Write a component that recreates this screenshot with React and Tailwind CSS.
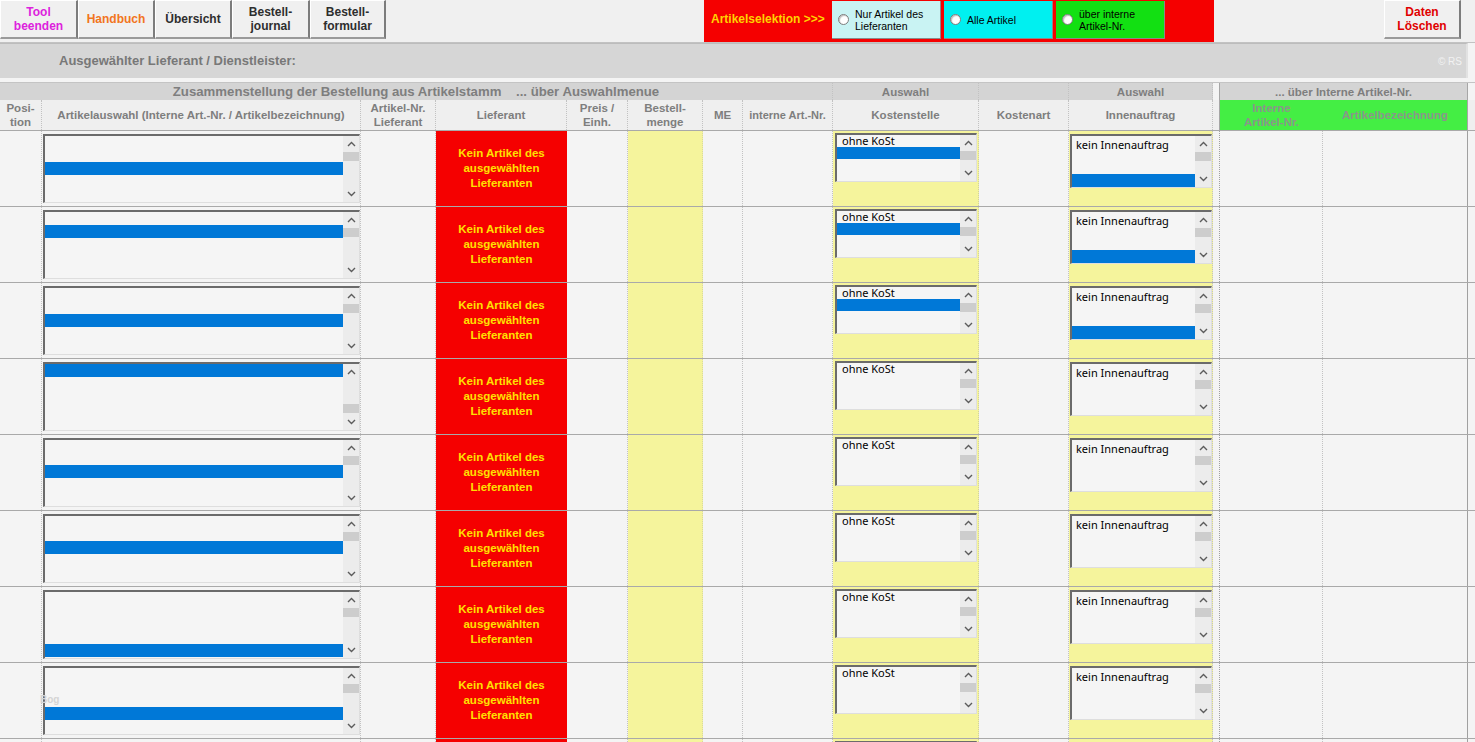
import React from "react";

const ARIAL = "font-['Liberation_Sans',Arial,sans-serif]";
const SEGOE = "font-['Noto_Sans','Open_Sans',sans-serif]";

const Up = () => (
  <svg width="9" height="6" viewBox="0 0 9 6">
    <path d="M1 5 L4.5 1.5 L8 5" fill="none" stroke="#5c5c5c" strokeWidth="1.4" />
  </svg>
);
const Down = () => (
  <svg width="9" height="6" viewBox="0 0 9 6">
    <path d="M1 1 L4.5 4.5 L8 1" fill="none" stroke="#5c5c5c" strokeWidth="1.4" />
  </svg>
);

function ScrollBar({ thumb = 0 }) {
  return (
    <div className="w-[16px] h-full bg-[#ececec] flex flex-col shrink-0">
      <div className="h-[16px] flex items-center justify-center shrink-0">
        <Up />
      </div>
      <div className="flex-1 w-full">
        <div className="h-[9px] w-full bg-[#cdcdcd]" style={{ marginTop: thumb }} />
      </div>
      <div className="h-[16px] flex items-center justify-center shrink-0">
        <Down />
      </div>
    </div>
  );
}

function ListBox({ className, children, thumb }) {
  return (
    <div
      className={`flex border-t-2 border-l-2 border-r border-b border-t-[#6b6b6b] border-l-[#6b6b6b] border-r-[#dedede] border-b-[#dedede] bg-[#f5f5f5] ${className}`}
    >
      <div className="flex-1 min-w-0">{children}</div>
      <ScrollBar thumb={thumb} />
    </div>
  );
}

function Btn({ children, className }) {
  return (
    <div
      className={`h-[39px] shrink-0 flex items-center justify-center text-center text-[12px] leading-[14px] font-bold bg-[#f0f0f0] border-t border-l border-t-white border-l-white border-r-2 border-b-2 border-r-[#7c7c7c] border-b-[#9a9a9a] ${ARIAL} ${className}`}
    >
      <div>{children}</div>
    </div>
  );
}

function Radio() {
  return (
    <div className="w-[11px] h-[11px] rounded-full bg-white border border-[#7d7d7d] shadow-[inset_1px_1px_1px_rgba(0,0,0,0.25)] shrink-0" />
  );
}

function Option({ className, children }) {
  return (
    <div
      className={`w-[109px] h-[38px] mt-[1px] shrink-0 flex items-center gap-[6px] pl-[6px] border-r border-b border-r-[#8a8a8a] border-b-[#8a8a8a] ${className}`}
    >
      <Radio />
      <div className={`text-[10.5px] leading-[12px] text-black ${ARIAL}`}>{children}</div>
    </div>
  );
}

const rows = [
  { sel: 26, thumb: 0, kost: true, innen: true },
  { sel: 13, thumb: 0, kost: true, innen: true },
  { sel: 26, thumb: 0, kost: true, innen: true },
  { sel: 0, thumb: 24, kost: false, innen: false },
  { sel: 25, thumb: 0, kost: false, innen: false },
  { sel: 25, thumb: 0, kost: false, innen: false },
  { sel: 52, thumb: 0, kost: false, innen: false },
  { sel: 39, thumb: 0, kost: false, innen: false, bog: true },
  { sel: 26, thumb: 0, kost: false, innen: false, partial: true },
];

const SEP = "border-r border-dotted border-[#c2c2c2]";

function Row({ r }) {
  return (
    <div className="relative flex h-[76px] shrink-0 border-t border-[#a9a9a9]">
      <div className={`w-[42px] shrink-0 ${SEP}`} />
      <div className={`w-[319px] shrink-0 pl-[1px] pt-[3px] ${SEP}`}>
        <ListBox className="w-[317px] h-[69px]" thumb={r.thumb}>
          <div className="h-[13px] bg-[#0078d7]" style={{ marginTop: r.sel }} />
        </ListBox>
      </div>
      <div className={`w-[75px] shrink-0 ${SEP}`} />
      <div
        className={`w-[131px] shrink-0 bg-[#f50000] flex items-center justify-center text-center text-[11.5px] leading-[15px] font-bold text-[#ffe000] ${ARIAL}`}
      >
        {!r.partial && (
          <div>
            Kein Artikel des
            <br />
            ausgewählten
            <br />
            Lieferanten
          </div>
        )}
      </div>
      <div className={`w-[61px] shrink-0 ${SEP}`} />
      <div className="w-[75px] shrink-0 bg-[#f5f49c] border-r border-dotted border-[#d8d8a0]" />
      <div className={`w-[40px] shrink-0 ${SEP}`} />
      <div className={`w-[90px] shrink-0 ${SEP}`} />
      <div className="w-[146px] shrink-0 bg-[#f5f49c] pl-[2px] pt-[2px] border-r border-dotted border-[#d0d0a0]">
        <ListBox className="w-[142px] h-[49px]" thumb={0}>
          {!r.partial && (
            <div className={`h-[12px] pl-[5px] text-[11px] leading-[12px] text-black whitespace-nowrap ${SEGOE}`}>ohne KoSt</div>
          )}
          {r.kost && <div className="h-[12px] bg-[#0078d7]" />}
        </ListBox>
      </div>
      <div className={`w-[90px] shrink-0 ${SEP}`} />
      <div className="w-[144px] shrink-0 bg-[#f5f49c] pl-[1px] pt-[3px] border-r border-dotted border-[#c2c2c2]">
        <ListBox className="w-[142px] h-[54px]" thumb={0}>
          {!r.partial && (
            <div className={`h-[15px] pt-[2px] pl-[4px] text-[11px] leading-[13px] text-black whitespace-nowrap ${SEGOE}`}>
              kein Innenauftrag
            </div>
          )}
          {r.innen && <div className="h-[13px] mt-[23px] bg-[#0078d7]" />}
        </ListBox>
      </div>
      <div className="w-[6px] shrink-0" />
      <div className="w-[104px] shrink-0 border-l border-l-[#a0a0a0] border-r border-dotted border-r-[#c2c2c2]" />
      <div className="w-[145px] shrink-0 border-r border-r-[#a0a0a0]" />
      <div className="flex-1" />
      {r.bog && (
        <div className={`absolute left-[40px] top-[29px] text-[10px] font-bold text-[#d4d4d4] ${ARIAL}`}>Bog</div>
      )}
    </div>
  );
}

const HB = `flex items-center justify-center text-center text-[11.5px] leading-[14px] font-bold text-[#7e7e7e] ${ARIAL}`;

export default function App() {
  return (
    <div className="w-[1475px] h-[742px] overflow-hidden bg-[#f4f4f4] flex flex-col">
      {/* Top bar */}
      <div className="h-[43px] shrink-0 flex items-start bg-[#f0f0f0] border-b border-[#c2c2c2]">
        <Btn className="w-[78px] text-[#dd22dd]">
          Tool
          <br />
          beenden
        </Btn>
        <Btn className="w-[77px] text-[#f27521]">Handbuch</Btn>
        <Btn className="w-[77px] text-[#2e2e2e]">Übersicht</Btn>
        <Btn className="w-[78px] text-[#2e2e2e]">
          Bestell-
          <br />
          journal
        </Btn>
        <Btn className="w-[76px] text-[#2e2e2e]">
          Bestell-
          <br />
          formular
        </Btn>
        <div className="ml-[318px] w-[510px] h-[42px] shrink-0 bg-[#f50000] flex items-start">
          <div className={`w-[128px] h-[38px] pl-[7px] flex items-center text-[12px] font-bold text-[#ffd200] ${ARIAL}`}>
            Artikelselektion &gt;&gt;&gt;
          </div>
          <Option className="bg-[#c9f3f3]">
            Nur Artikel des
            <br />
            Lieferanten
          </Option>
          <Option className="ml-[3px] bg-[#00f0f0]">Alle Artikel</Option>
          <Option className="ml-[3px] bg-[#12e012]">
            über interne
            <br />
            Artikel-Nr.
          </Option>
        </div>
        <Btn className="w-[77px] ml-[170px] text-[#e00000]">
          Daten
          <br />
          Löschen
        </Btn>
      </div>

      {/* Supplier band */}
      <div className="h-[35px] w-[1468px] shrink-0 bg-[#d6d6d6] border-t border-[#bcbcbc] border-r-2 border-r-[#e2e2e2] flex items-center">
        <div className={`pl-[59px] flex-1 text-[13px] font-bold text-[#787878] ${ARIAL}`}>
          Ausgewählter Lieferant / Dienstleister:
        </div>
        <div className={`pr-[4px] text-[10px] text-[#f2f2f2] ${ARIAL}`}>© RS</div>
      </div>

      <div className="h-[4px] shrink-0" />

      {/* Header row A */}
      <div className="h-[18px] shrink-0 flex border-t border-[#c4c4c4]">
        <div className={`w-[833px] shrink-0 bg-[#d4d4d4] ${HB} text-[13.2px] whitespace-pre ${SEP}`}>
          {"Zusammenstellung der Bestellung aus Artikelstamm    ... über Auswahlmenue"}
        </div>
        <div className={`w-[146px] shrink-0 bg-[#d4d4d4] ${HB} ${SEP}`}>Auswahl</div>
        <div className={`w-[90px] shrink-0 bg-[#d4d4d4] ${SEP}`} />
        <div className={`w-[144px] shrink-0 bg-[#d4d4d4] ${HB} ${SEP}`}>Auswahl</div>
        <div className="w-[6px] shrink-0" />
        <div className={`w-[249px] shrink-0 bg-[#d4d4d4] border-l border-r border-[#a6a6a6] ${HB}`}>
          ... über Interne Artikel-Nr.
        </div>
      </div>

      {/* Header row B */}
      <div className="h-[30px] shrink-0 flex bg-[#efefef]">
        <div className={`w-[42px] shrink-0 ${HB} ${SEP}`}>
          Posi-
          <br />
          tion
        </div>
        <div className={`w-[319px] shrink-0 ${HB} ${SEP}`}>Artikelauswahl (Interne Art.-Nr. / Artikelbezeichnung)</div>
        <div className={`w-[75px] shrink-0 ${HB} ${SEP}`}>
          Artikel-Nr.
          <br />
          Lieferant
        </div>
        <div className={`w-[131px] shrink-0 ${HB} ${SEP}`}>Lieferant</div>
        <div className={`w-[61px] shrink-0 ${HB} ${SEP}`}>
          Preis /
          <br />
          Einh.
        </div>
        <div className={`w-[75px] shrink-0 ${HB} ${SEP}`}>
          Bestell-
          <br />
          menge
        </div>
        <div className={`w-[40px] shrink-0 ${HB} ${SEP}`}>ME</div>
        <div className={`w-[90px] shrink-0 ${HB} text-[11px] ${SEP}`}>interne Art.-Nr.</div>
        <div className={`w-[146px] shrink-0 ${HB} ${SEP}`}>Kostenstelle</div>
        <div className={`w-[90px] shrink-0 ${HB} ${SEP}`}>Kostenart</div>
        <div className={`w-[144px] shrink-0 ${HB} ${SEP}`}>Innenauftrag</div>
        <div className="w-[6px] shrink-0" />
        <div className="w-[249px] shrink-0 flex bg-[#44ee44] border-l border-r border-[#a6a6a6]">
          <div className={`w-[103px] shrink-0 ${HB} text-[#8a968a]`}>
            Interne
            <br />
            Artikel-Nr.
          </div>
          <div className={`flex-1 ${HB} text-[#8a968a]`}>Artikelbezeichnung</div>
        </div>
      </div>

      {rows.map((r, i) => (
        <Row key={i} r={r} />
      ))}
    </div>
  );
}
